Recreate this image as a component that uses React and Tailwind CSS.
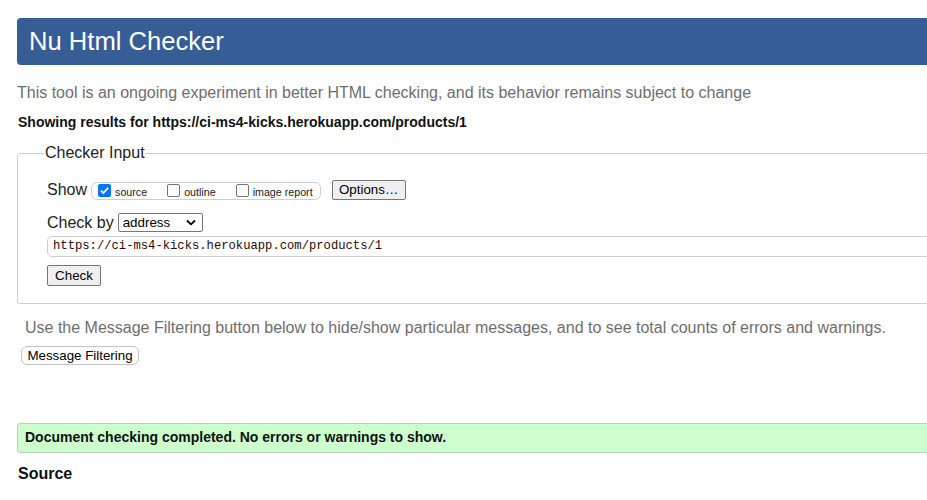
import { useState } from 'react';

const URL = 'https://ci-ms4-kicks.herokuapp.com/products/1';

function Check({ label, checked, onChange }) {
  return (
    <label className="flex items-center gap-[4px]">
      {checked ? (
        <span className="w-[13px] h-[13px] rounded-[2px] bg-[#0075ff] flex items-center justify-center">
          <svg width="11" height="11" viewBox="0 0 11 11">
            <path d="M2 5.6 L4.4 8 L9 2.8" fill="none" stroke="#fff" strokeWidth="1.8" />
          </svg>
        </span>
      ) : (
        <span className="w-[13px] h-[13px] rounded-[2px] border border-[#767676] bg-white" />
      )}
      <span className="text-[10.7px] leading-[14px] mt-[3px] text-[#222]" onClick={onChange}>{label}</span>
    </label>
  );
}

export default function App() {
  const [show, setShow] = useState({ source: true, outline: false, image: false });
  const toggle = k => setShow(s => ({ ...s, [k]: !s[k] }));

  return (
    <div className="w-[927px] h-[500px] overflow-hidden bg-white font-['Liberation_Sans',Arial,sans-serif]">
      <div className="w-[1100px] pl-[17px]">
        {/* Header */}
        <div className="mt-[18px] h-[47px] bg-[#365d95] rounded-l-[4px] flex items-center pl-[12px]">
          <h1 className="text-[25.6px] leading-none text-white">Nu Html Checker</h1>
        </div>

        <p className="mt-[18px] text-[16px] leading-[20px] text-[#6e6e6e]">
          This tool is an ongoing experiment in better HTML checking, and its behavior remains subject to change
        </p>
        <p className="mt-[9px] ml-px text-[14px] leading-[20px] font-bold text-[#111]">
          Showing results for {URL}
        </p>

        {/* Checker input */}
        <fieldset className="mt-[11px] border border-[#cfcfcf] rounded-[3px] pl-[29px] pb-[16px]">
          <legend className="-ml-[2px] text-[16px] leading-[20px] text-[#222]">Checker Input</legend>

          <div className="mt-[16px] h-[21px] flex items-center text-[16px] text-[#222]">
            <span>Show</span>
            <div className="ml-[4px] h-[18px] mt-[2px] pl-[6px] pr-[7px] border border-[#cfcfcf] rounded-[6px] flex items-center gap-[20px]">
              <Check label="source" checked={show.source} onChange={() => toggle('source')} />
              <Check label="outline" checked={show.outline} onChange={() => toggle('outline')} />
              <Check label="image report" checked={show.image} onChange={() => toggle('image')} />
            </div>
            <button className="ml-[11px] w-[74px] h-[20px] border border-[#767676] rounded-[2px] bg-[#efefef] text-[13.33px] leading-none text-black">
              Options…
            </button>
          </div>

          <div className="mt-[13px] h-[19px] flex items-center text-[16px] text-[#222]">
            <span>Check by</span>
            <div className="ml-[4px] w-[85px] h-[19px] border border-[#767676] rounded-[2px] bg-white flex items-center justify-between pl-[4px] pr-[6px]">
              <span className="text-[13.33px] leading-none text-black">address</span>
              <svg width="10" height="7" viewBox="0 0 10 7">
                <path d="M1 1.5 L5 5.3 L9 1.5" fill="none" stroke="#000" strokeWidth="1.8" />
              </svg>
            </div>
          </div>

          <div className="mt-[4px] w-[1000px] h-[21px] border border-[#cfcfcf] rounded-[5px] flex items-center pl-[5px]">
            <span className="font-['Liberation_Mono',monospace] text-[12.2px] leading-none text-[#2a0808]">{URL}</span>
          </div>

          <button className="mt-[8px] w-[54px] h-[21px] border border-[#767676] rounded-[2px] bg-[#efefef] text-[13.33px] leading-none text-black">
            Check
          </button>
        </fieldset>

        <p className="mt-[14px] ml-[8px] text-[16px] leading-[20px] text-[#6e6e6e]">
          Use the Message Filtering button below to hide/show particular messages, and to see total counts of errors and warnings.
        </p>
        <div className="mt-[8px] ml-[4px] flex">
          <button className="w-[118px] h-[19px] border border-[#c4c4c4] rounded-[6px] bg-white text-[13.33px] leading-none text-black">
            Message Filtering
          </button>
        </div>

        <div className="mt-[58px] h-[30px] border border-[#c8c8c8] rounded-l-[3px] bg-[#ccffcc] flex items-center pl-[7px]">
          <span className="text-[14px] font-bold text-[#111]">Document checking completed. No errors or warnings to show.</span>
        </div>

        <h2 className="mt-[11px] ml-px text-[16px] leading-[20px] font-bold text-[#111]">Source</h2>
      </div>
    </div>
  );
}
